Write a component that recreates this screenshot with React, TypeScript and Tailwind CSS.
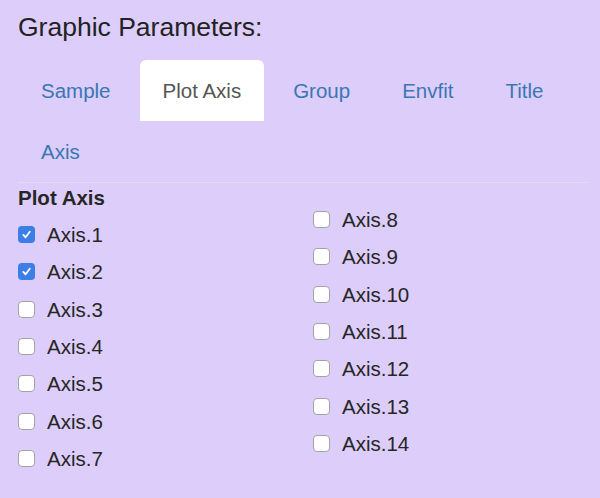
import React, { useState } from 'react';

const tabs = ['Sample', 'Plot Axis', 'Group', 'Envfit', 'Title', 'Axis'];

const Check: React.FC<{ checked: boolean }> = ({ checked }) => (
  <span
    className={
      checked
        ? 'flex h-[17px] w-[17px] items-center justify-center rounded-[4px] bg-[#3b7ee8]'
        : 'flex h-[17px] w-[17px] items-center justify-center rounded-[4px] border border-[#a3a3a3] bg-white'
    }
  >
    {checked && (
      <svg width="11" height="11" viewBox="0 0 12 12" fill="none">
        <path d="M2.5 6.4 L5 9 L9.6 3" stroke="white" strokeWidth="2" strokeLinecap="round" strokeLinejoin="round" />
      </svg>
    )}
  </span>
);

const Item: React.FC<{ label: string; checked: boolean; onToggle: () => void }> = ({ label, checked, onToggle }) => (
  <label className="flex h-[37.33px] cursor-pointer items-center gap-[12px]" onClick={onToggle}>
    <Check checked={checked} />
    <span className="text-[20.5px] leading-[29px] text-[#262626]">{label}</span>
  </label>
);

const App: React.FC = () => {
  const [active, setActive] = useState('Plot Axis');
  const [checked, setChecked] = useState<Record<number, boolean>>({ 1: true, 2: true });

  const toggle = (n: number) => setChecked((c) => ({ ...c, [n]: !c[n] }));

  const left = [1, 2, 3, 4, 5, 6, 7];
  const right = [8, 9, 10, 11, 12, 13, 14];

  return (
    <div className="min-h-screen w-full bg-[#dccdfa] pl-[18px] pr-[13px] pt-[13px]" style={{ fontFamily: '"Liberation Sans", Arial, sans-serif' }}>
      <h4 className="text-[26.5px] leading-[29px] text-[#222]">Graphic Parameters:</h4>

      <div className="mt-[18px] flex flex-wrap gap-x-[6px] border-b border-[#e4dcef]">
        {tabs.map((t) => (
          <button
            key={t}
            onClick={() => setActive(t)}
            className={
              active === t
                ? 'h-[61px] rounded-t-[6px] bg-white px-[23px] text-[20.5px] leading-[29px] text-[#555]'
                : 'h-[61px] rounded-t-[6px] px-[23px] text-[20.5px] leading-[29px] text-[#3a77b3]'
            }
          >
            {t}
          </button>
        ))}
      </div>

      <div className="flex">
        <div className="w-[295px]">
          <div className="mb-[4px] text-[20.5px] font-bold leading-[29px] text-[#262626]">Plot Axis</div>
          {left.map((n) => (
            <Item key={n} label={`Axis.${n}`} checked={!!checked[n]} onToggle={() => toggle(n)} />
          ))}
        </div>
        <div className="pt-[18px]">
          {right.map((n) => (
            <Item key={n} label={`Axis.${n}`} checked={!!checked[n]} onToggle={() => toggle(n)} />
          ))}
        </div>
      </div>
    </div>
  );
};

export default App;
